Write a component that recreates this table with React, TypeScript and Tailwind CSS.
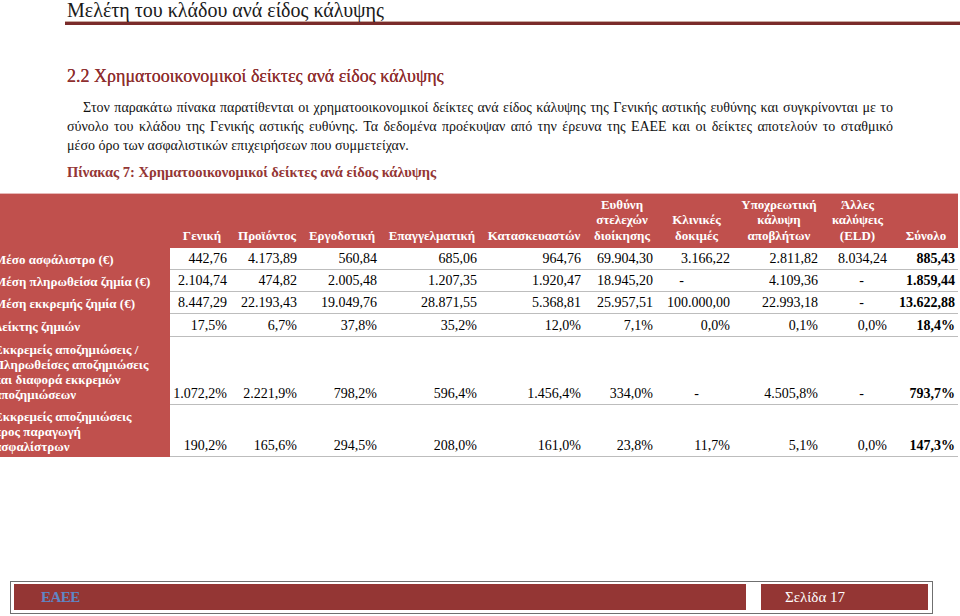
import React from "react";

const COLS = "grid grid-cols-[170px_60px_70px_80px_100px_104px_72px_77px_88px_69px_68px]";

const HEADERS: string[][] = [
  ["Γενική"],
  ["Προϊόντος"],
  ["Εργοδοτική"],
  ["Επαγγελματική"],
  ["Κατασκευαστών"],
  ["Ευθύνη", "στελεχών", "διοίκησης"],
  ["Κλινικές", "δοκιμές"],
  ["Υποχρεωτική", "κάλυψη", "αποβλήτων"],
  ["Άλλες", "καλύψεις", "(ELD)"],
  ["Σύνολο"],
];

type Row = { label: string[]; h: string; vals: string[] };

const ROWS: Row[] = [
  {
    label: ["Μέσο ασφάλιστρο (€)"],
    h: "h-[22px]",
    vals: ["442,76", "4.173,89", "560,84", "685,06", "964,76", "69.904,30", "3.166,22", "2.811,82", "8.034,24", "885,43"],
  },
  {
    label: ["Μέση πληρωθείσα ζημία (€)"],
    h: "h-[22px]",
    vals: ["2.104,74", "474,82", "2.005,48", "1.207,35", "1.920,47", "18.945,20", "-a", "4.109,36", "-c", "1.859,44"],
  },
  {
    label: ["Μέση εκκρεμής ζημία (€)"],
    h: "h-[22px]",
    vals: ["8.447,29", "22.193,43", "19.049,76", "28.871,55", "5.368,81", "25.957,51", "100.000,00", "22.993,18", "-c", "13.622,88"],
  },
  {
    label: ["Δείκτης ζημιών"],
    h: "h-[23px]",
    vals: ["17,5%", "6,7%", "37,8%", "35,2%", "12,0%", "7,1%", "0,0%", "0,1%", "0,0%", "18,4%"],
  },
  {
    label: ["Εκκρεμείς αποζημιώσεις /", "Πληρωθείσες αποζημιώσεις", "και διαφορά εκκρεμών", "αποζημιώσεων"],
    h: "h-[68px]",
    vals: ["1.072,2%", "2.221,9%", "798,2%", "596,4%", "1.456,4%", "334,0%", "-b", "4.505,8%", "-c", "793,7%"],
  },
  {
    label: ["Εκκρεμείς αποζημιώσεις", "προς παραγωγή", "ασφαλίστρων"],
    h: "h-[52px]",
    vals: ["190,2%", "165,6%", "294,5%", "208,0%", "161,0%", "23,8%", "11,7%", "5,1%", "0,0%", "147,3%"],
  },
];

// accounting-style dashes sit left of the right edge
function cellPad(v: string): string {
  if (v === "-a") return "pr-[49px]";
  if (v === "-b") return "pr-[34px]";
  if (v === "-c") return "pr-[26px]";
  return "pr-[3px]";
}

export default function App() {
  return (
    <div className="w-[960px] h-[616px] overflow-hidden bg-white flex flex-col font-['Liberation_Serif',serif] text-black">
      {/* running header */}
      <header className="pl-[65px]">
        <div className="pl-[2px] text-[20px] leading-[21px] text-[#1a1a1a]">Μελέτη του κλάδου ανά είδος κάλυψης</div>
        <div className="h-px bg-[#c9a9a0]" />
        <div className="h-[3px] bg-[#7a2b2b]" />
      </header>

      <section className="pl-[67px] pr-[67px]">
        <h2 className="mt-[41px] text-[18px] leading-[20px] text-[#8e2f2f] [text-shadow:0_0_0.4px_#8e2f2f]">
          2.2 Χρηματοοικονομικοί δείκτες ανά είδος κάλυψης
        </h2>
        <div className="mt-[12px] text-[14px] leading-[19px] text-[#111]">
          <p className="pl-[16px] text-justify [text-align-last:justify]">
            Στον παρακάτω πίνακα παρατίθενται οι χρηματοοικονομικοί δείκτες ανά είδος κάλυψης της Γενικής αστικής ευθύνης και συγκρίνονται με το
          </p>
          <p className="text-justify [text-align-last:justify]">
            σύνολο του κλάδου της Γενικής αστικής ευθύνης. Τα δεδομένα προέκυψαν από την έρευνα της ΕΑΕΕ και οι δείκτες αποτελούν το σταθμικό
          </p>
          <p>μέσο όρο των ασφαλιστικών επιχειρήσεων που συμμετείχαν.</p>
        </div>
        <p className="mt-[8px] text-[14.5px] leading-[18px] font-bold text-[#943634]">
          Πίνακας 7: Χρηματοοικονομικοί δείκτες ανά είδος κάλυψης
        </p>
      </section>

      {/* table */}
      <div className="mt-[12px] w-[958px]">
        <div className={`${COLS} h-[55px] bg-[#c0504d] border-t border-[#e6b8b7] text-white font-bold text-[13px] leading-[15.5px]`}>
          <div />
          {HEADERS.map((h, i) => (
            <div key={i} className="flex flex-col justify-end items-center pb-[5px] pl-[4px] text-center">
              {h.map((l) => (
                <span key={l}>{l}</span>
              ))}
            </div>
          ))}
        </div>
        {ROWS.map((r, i) => (
          <div key={i} className={`${COLS} ${r.h}`}>
            <div className="bg-[#c0504d] text-white font-bold text-[13px] leading-[15px] flex flex-col justify-end pb-[3px] whitespace-nowrap">
              {r.label.map((l) => (
                <span key={l} className="-ml-[6px]">
                  {l}
                </span>
              ))}
            </div>
            {r.vals.map((v, j) => (
              <div
                key={j}
                className={`flex items-end justify-end pb-[2px] border-b border-[#bdbdbd] text-[14px] leading-[16px] ${cellPad(v)} ${
                  j === 9 ? "font-bold" : ""
                }`}
              >
                {v.startsWith("-") ? "-" : v}
              </div>
            ))}
          </div>
        ))}
      </div>

      {/* page footer */}
      <footer className="mt-auto mb-[2px] ml-[10px] w-[923px] h-[33px] border border-[#6f6f6f] flex gap-[15px] pl-[3px] pr-[4px] pt-[2px] pb-[3px]">
        <div className="w-[732px] bg-[#943634] flex items-center pl-[27px] text-[15px] font-bold text-[#5f86c4] tracking-[-0.5px]">
          ΕΑΕΕ
        </div>
        <div className="flex-1 bg-[#943634] flex items-center pl-[24px] text-[15px] text-white">Σελίδα 17</div>
      </footer>
    </div>
  );
}
